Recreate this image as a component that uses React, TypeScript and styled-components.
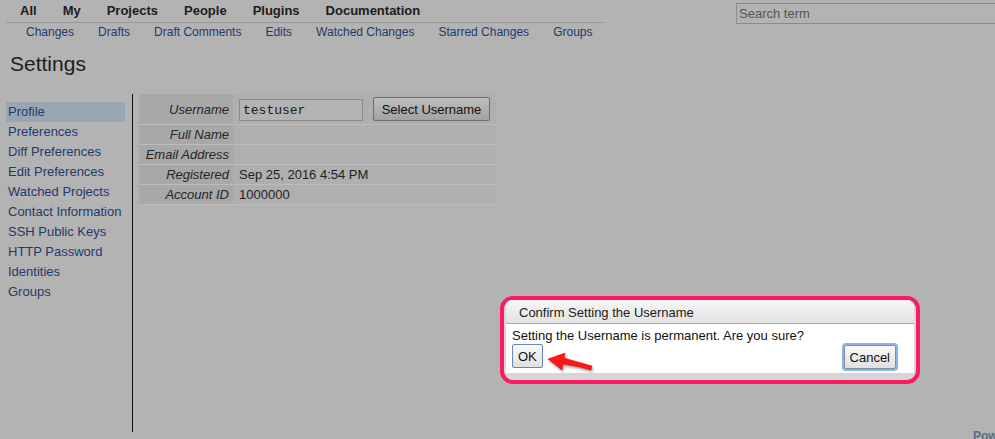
import styled, { createGlobalStyle } from 'styled-components'

const GlobalStyle = createGlobalStyle`
    body {
        margin: 0;
        background: #b3b3b3;
        overflow: hidden;
        font-family: "Liberation Sans", Arial, sans-serif;
    }
`

const Page = styled.div`
    position: relative;
    width: 995px;
    height: 439px;
    overflow: hidden;
`

const TopBar = styled.div`
    display: grid;
    grid-template-columns: 736px 1fr;
    padding-top: 2px;
`

const Menus = styled.div`
    margin-left: 6px;
    width: 599px;
`

const TopMenu = styled.nav`
    display: flex;
    padding-left: 1px;
    border-bottom: 1px solid #979797;
    padding-bottom: 3px;
`

const TopItem = styled.a`
    padding: 0 13px;
    font-size: 13px;
    font-weight: bold;
    line-height: 17px;
    color: #1c1c1c;
`

const SubMenu = styled.nav`
    display: flex;
    padding-left: 8px;
    padding-top: 1px;
`

const SubItem = styled.a`
    padding: 0 12px;
    font-size: 12px;
    line-height: 17px;
    color: #1f3a6c;
`

const SearchBox = styled.input`
    box-sizing: border-box;
    width: 320px;
    height: 21px;
    margin-top: 1px;
    padding: 0 2px;
    border: 1px solid #8a8a8a;
    background: #b3b3b3;
    font-family: "Liberation Sans", Arial, sans-serif;
    font-size: 13px;
    color: #555;
    &::placeholder {
        color: #555;
    }
`

const Title = styled.h1`
    margin: 9px 0 0 10px;
    font-size: 21px;
    font-weight: normal;
    line-height: 28px;
    color: #1e1e1e;
`

const Body = styled.div`
    display: flex;
    margin-top: 16px;
`

const SideNav = styled.div`
    width: 133px;
    height: 338px;
    padding-top: 8px;
    box-sizing: border-box;
    border-right: 1.5px solid #111;
    display: flex;
    flex-direction: column;
`

const NavItem = styled.a<{ $active?: boolean }>`
    width: 117px;
    margin-left: 6px;
    padding-left: 2px;
    font-size: 13px;
    line-height: 20px;
    color: #1f3a6c;
    background: ${(p) => (p.$active ? '#99a7b3' : 'transparent')};
`

const Main = styled.div`
    padding-left: 6px;
`

const InfoTable = styled.table`
    border-collapse: collapse;
    width: 357px;
    font-size: 13px;
`

const Label = styled.th`
    width: 94px;
    box-sizing: border-box;
    padding: 0 4px 0 0;
    text-align: right;
    font-style: italic;
    font-weight: normal;
    color: #262626;
    background: #a8a8a8;
    border-bottom: 1px solid #bcbcbc;
    height: 19px;
`

const Value = styled.td<{ $tall?: boolean }>`
    padding: 0 0 0 6px;
    color: #1e1e1e;
    background: #afafaf;
    border-bottom: 1px solid #bcbcbc;
    height: ${(p) => (p.$tall ? '27px' : '19px')};
    vertical-align: ${(p) => (p.$tall ? 'top' : 'middle')};
    padding-top: ${(p) => (p.$tall ? '3px' : '0')};
`

const ValueRow = styled.div`
    display: flex;
    align-items: flex-start;
    gap: 10px;
`

const NameInput = styled.input`
    box-sizing: border-box;
    width: 124px;
    height: 22px;
    margin-top: 2px;
    padding: 0 3px;
    border: 1px solid #8a8a8a;
    background: #b3b3b3;
    font-family: "Liberation Mono", "Courier New", monospace;
    font-size: 13px;
    color: #1a1a1a;
`

const SelectButton = styled.button`
    box-sizing: border-box;
    width: 117px;
    height: 24px;
    padding: 0;
    border: 1px solid #6e6e6e;
    border-radius: 2px;
    background: linear-gradient(#bdbdbd, #a2a2a2);
    font-family: "Liberation Sans", Arial, sans-serif;
    font-size: 13px;
    color: #111;
`

const Footer = styled.div`
    padding-left: 973px;
    margin-top: -3px;
    font-size: 12px;
    font-weight: bold;
    color: #5c6a82;
    white-space: nowrap;
`

const Highlight = styled.div`
    position: absolute;
    left: 500px;
    top: 296px;
    width: 420px;
    height: 88px;
    box-sizing: border-box;
    border: 4px solid #fd1a5e;
    border-radius: 13px;
    background: #d6d6d6;
    overflow: hidden;
`

const Dialog = styled.div`
    margin: 0 2px;
    background: #fff;
    height: 73px;
`

const DialogHeader = styled.div`
    height: 24px;
    padding-left: 13px;
    box-sizing: border-box;
    border-bottom: 1px solid #a9a9a9;
    background: linear-gradient(#f7f7f7, #e3e3e3);
    font-size: 13px;
    line-height: 26px;
    color: #1a1a1a;
`

const DialogBody = styled.div`
    padding: 3px 18px 0 6px;
    font-size: 13px;
    color: #111;
`

const Message = styled.div`
    line-height: 17px;
`

const Buttons = styled.div`
    display: flex;
    justify-content: space-between;
    align-items: flex-start;
`

const DialogButton = styled.button<{ $focused?: boolean }>`
    box-sizing: border-box;
    height: 24px;
    padding: 0 5px;
    border: 1px solid ${(p) => (p.$focused ? '#8a8a8a' : '#6a84b4')};
    border-radius: 2px;
    background: linear-gradient(#fbfbfb, #e0e0e0);
    font-family: "Liberation Sans", Arial, sans-serif;
    font-size: 13px;
    color: #111;
    margin-top: ${(p) => (p.$focused ? '1px' : '0')};
    box-shadow: ${(p) => (p.$focused ? '0 0 0 2px #84b4f4' : 'none')};
`

const Arrow = styled.svg`
    position: absolute;
    left: 544px;
    top: 350px;
`

const topMenu = ['All', 'My', 'Projects', 'People', 'Plugins', 'Documentation']
const subMenu = ['Changes', 'Drafts', 'Draft Comments', 'Edits', 'Watched Changes', 'Starred Changes', 'Groups']
const navItems = [
    'Profile',
    'Preferences',
    'Diff Preferences',
    'Edit Preferences',
    'Watched Projects',
    'Contact Information',
    'SSH Public Keys',
    'HTTP Password',
    'Identities',
    'Groups',
]

export default function App() {
    return (
        <>
            <GlobalStyle />
            <Page>
                <TopBar>
                    <Menus>
                        <TopMenu>
                            {topMenu.map((m) => <TopItem key={m}>{m}</TopItem>)}
                        </TopMenu>
                        <SubMenu>
                            {subMenu.map((m) => <SubItem key={m}>{m}</SubItem>)}
                        </SubMenu>
                    </Menus>
                    <SearchBox placeholder="Search term" />
                </TopBar>
                <Title>Settings</Title>
                <Body>
                    <SideNav>
                        {navItems.map((n, i) => <NavItem key={n} $active={i === 0}>{n}</NavItem>)}
                    </SideNav>
                    <Main>
                        <InfoTable>
                            <tbody>
                                <tr>
                                    <Label>Username</Label>
                                    <Value $tall>
                                        <ValueRow>
                                            <NameInput defaultValue="testuser" />
                                            <SelectButton>Select Username</SelectButton>
                                        </ValueRow>
                                    </Value>
                                </tr>
                                <tr><Label>Full Name</Label><Value></Value></tr>
                                <tr><Label>Email Address</Label><Value></Value></tr>
                                <tr><Label>Registered</Label><Value>Sep 25, 2016 4:54 PM</Value></tr>
                                <tr><Label>Account ID</Label><Value>1000000</Value></tr>
                            </tbody>
                        </InfoTable>
                    </Main>
                </Body>
                <Footer>Powered by Gerrit Code Review</Footer>

                <Highlight>
                    <Dialog>
                        <DialogHeader>Confirm Setting the Username</DialogHeader>
                        <DialogBody>
                            <Message>Setting the Username is permanent. Are you sure?</Message>
                            <Buttons>
                                <DialogButton>OK</DialogButton>
                                <DialogButton $focused>Cancel</DialogButton>
                            </Buttons>
                        </DialogBody>
                    </Dialog>
                </Highlight>
                <Arrow width="52" height="26" viewBox="0 0 52 26">
                    <path
                        d="M4 9 L21 3 L20 8 Q34 12 48 16 L47 20 Q33 16 19 14 L18 20 Z"
                        fill="#ff1616"
                        stroke="#d40000"
                        strokeWidth="0.5"
                        style={{ filter: 'drop-shadow(1px 2px 1px rgba(0,0,0,0.35))' }}
                    />
                </Arrow>
            </Page>
        </>
    )
}
